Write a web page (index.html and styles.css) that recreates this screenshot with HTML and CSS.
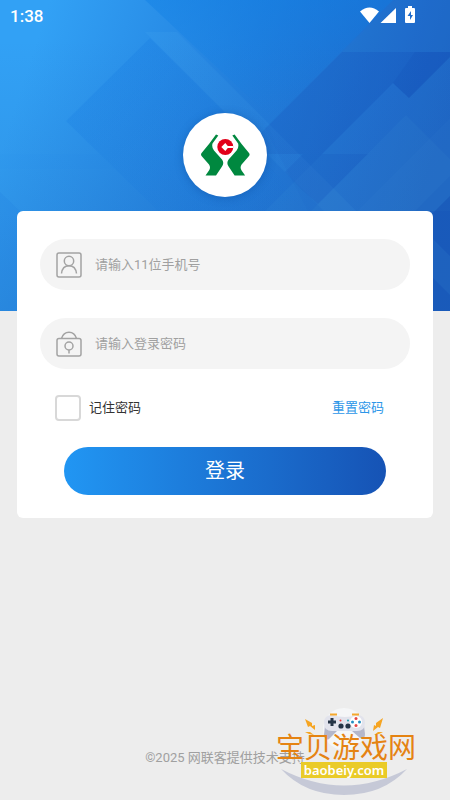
FILE: index.html
```html
<!DOCTYPE html>
<html lang="zh-CN">
<head>
<meta charset="utf-8">
<meta name="viewport" content="width=device-width, initial-scale=1">
<title>登录</title>
<link rel="stylesheet" href="styles.css">
</head>
<body>
<header class="hero">
  <svg class="hero-art" viewBox="0 0 450 311" preserveAspectRatio="none" aria-hidden="true">
    <defs>
      <linearGradient id="sky" gradientUnits="userSpaceOnUse" x1="30" y1="60" x2="430" y2="190">
        <stop offset="0" stop-color="#32a1f5"/>
        <stop offset=".5" stop-color="#227fdd"/>
        <stop offset="1" stop-color="#1c61c3"/>
      </linearGradient>
      <linearGradient id="shade" x1="0" y1="0" x2="1" y2="1">
        <stop offset="0" stop-color="#0b6ddc" stop-opacity=".22"/>
        <stop offset="1" stop-color="#0b6ddc" stop-opacity="0"/>
      </linearGradient>
      <linearGradient id="top" x1="0" y1="0" x2="0" y2="1">
        <stop offset="0" stop-color="#0d7de4" stop-opacity=".4"/>
        <stop offset="1" stop-color="#0d7de4" stop-opacity="0"/>
      </linearGradient>
      <linearGradient id="light" x1="0" y1="0" x2="1" y2="1">
        <stop offset="0" stop-color="#5ab8f2" stop-opacity=".1"/>
        <stop offset="1" stop-color="#5ab8f2" stop-opacity=".07"/>
      </linearGradient>
      <linearGradient id="low" x1="0" y1="0" x2="0" y2="1">
        <stop offset="0" stop-color="#2468b8" stop-opacity="0"/>
        <stop offset="1" stop-color="#2468b8" stop-opacity=".3"/>
      </linearGradient>
    </defs>
    <path fill="url(#sky)" d="M0 0h450v311H0z"/>
    <path fill="url(#low)" d="M0 40h450v271H0z"/>
    <path fill="url(#top)" d="M145 0h248L273 120z"/>
    <path fill="url(#shade)" d="M150 38 66 121l92 90h150L225 113z"/>
    <path fill="url(#light)" d="M145 32h32l179 179h-32z"/>
    <path fill="#1558bd" fill-opacity=".08" d="M395 0h55v211H308l-43-83z"/>
    <path fill="#3a97df" fill-opacity=".08" d="M395 0h55v52H342z"/>
    <path fill="#0d45ad" fill-opacity=".12" d="M342 52h108v5l-41 41-16-15-71 71h-82z"/>
    <path fill="#0d45ad" fill-opacity=".12" d="m415 52h35v5l-41 41-16-15z"/>
    <path fill="#4aa5e2" fill-opacity=".08" d="m450 57-41 41-16-15-128 128h150l35-35z"/>
    <path fill="#0d49ae" fill-opacity=".13" d="M303 154h65l-50 50-16-14-17-18z"/>
    <path fill="#50a6df" fill-opacity=".08" d="m406 115 44 44v52H311z"/>
    <path fill="#3b8bd8" fill-opacity=".08" d="m450 118-93 93h78l15-15z"/>
    <path fill="#0c40a9" fill-opacity=".25" d="m450 196-22 22v93h22z"/>
    <path fill="#4b9be1" fill-opacity=".12" d="m433 239 17 17v39l-17-17z"/>
    <path fill="#1875dc" fill-opacity=".12" d="m0 192 20 19v100H0z"/>
    <path fill="#238be9" fill-opacity=".05" d="M0 154h190v15H0z"/>
  </svg>
  <div class="status">
    <time>1:38</time>
    <svg width="56" height="18" viewBox="0 0 56 18" fill="#fff" role="img" aria-label="网络与电量">
      <path d="M0 5.500Q9.500-2.500 19 5.500L9.500 17z"/>
      <path d="M36 2v15H20.500z"/>
      <path fill-rule="evenodd" d="M48 0h4v2h2q1 0 1 1v13q0 1-1 1h-8q-1 0-1-1V3q0-1 1-1h2zm3 5-3.500 5H50v4l3-5h-2z"/>
    </svg>
  </div>
  <div class="logo">
    <svg width="49" height="42" viewBox="0 0 49 42" role="img" aria-label="标志">
      <g fill="#00883f">
        <path d="M15 .5 17.300 1.500 11.500 9.500q-1 4 1.500 7l8 9q2.500 3.500 0 7l-6 9H4.500l3.500-5q2-3 0-6l-7-8q-2-2 0-4L8 10z"/>
        <path transform="translate(48.600) scale(-1 1)" d="M15 .5 17.300 1.500 11.500 9.500q-1 4 1.500 7l8 9q2.500 3.500 0 7l-6 9H4.500l3.500-5q2-3 0-6l-7-8q-2-2 0-4L8 10z"/>
      </g>
      <circle cx="24.300" cy="13" r="8" fill="#e2001a"/>
      <path fill="#fff" d="M24.300 9 26.800 12h5.700v2h-5.700l-2.500 3-4-4z"/>
    </svg>
  </div>
</header>

<main class="card">
  <form>
    <div class="field">
      <svg class="field-icon" viewBox="0 0 26 26" aria-hidden="true">
        <rect x="1" y="1" width="24" height="24" rx="2"/>
        <circle cx="13" cy="9" r="4.700"/>
        <path d="M5.500 21.500C6 17 8.500 13.700 13 13.700s7 3.300 7.500 7.800"/>
      </svg>
      <input type="tel" aria-label="手机号" placeholder="请输入11位手机号">
    </div>
    <div class="field">
      <svg class="field-icon" viewBox="0 0 26 26" aria-hidden="true">
        <rect x="1" y="7.500" width="24" height="17.500" rx="2"/>
        <path d="M5.500 7.500C8-.8 18-.8 20.500 7.500"/>
        <circle cx="13" cy="15" r="4"/>
        <path d="M13 19v3.500"/>
      </svg>
      <input type="password" aria-label="登录密码" placeholder="请输入登录密码">
    </div>
    <div class="options">
      <label><input type="checkbox">记住密码</label>
      <a href="#reset">重置密码</a>
    </div>
    <button type="submit">登录</button>
  </form>
</main>

<footer class="footer">©2025 网联客提供技术支持</footer>

<aside class="mark">
  <svg class="mark-art" viewBox="0 0 140 88" aria-hidden="true">
    <path fill="#c6c9d7" d="M5 61q63 33 126 0-24 26-63 26T5 61z"/>
    <circle cx="68" cy="21" r="21" fill="#f6f7f9" fill-opacity=".8"/>
    <path fill="#b4b7ca" d="M53 9h31q3 1 4 8l1 9q0 6-5 4l-8-7H61l-8 8q-4 2-5-4l1-10q1-7 4-8z"/>
    <path fill="#e2e3ec" d="M56 7q13 4 25 0 8 0 8 8t-8 8H56q-8 0-8-8t8-8z"/>
    <path stroke="#f5a82c" stroke-width="2" d="M54 6.500h7M76 6.500h7"/>
    <path stroke="#253446" stroke-width="3" d="M52 14h8M56 10v8"/>
    <g fill="#253446"><circle cx="65" cy="18" r="2.600"/><circle cx="72" cy="18" r="2.600"/></g>
    <circle cx="64.500" cy="12.500" r="1" fill="#e33"/><circle cx="72" cy="12.500" r="1" fill="#29a"/>
    <circle cx="80" cy="14" r="6" fill="#fff"/>
    <g fill="#e64545"><circle cx="80" cy="10.500" r="1.500"/><circle cx="80" cy="17.500" r="1.500"/></g>
    <g fill="#248fc2"><circle cx="76.500" cy="14" r="1.500"/><circle cx="83.500" cy="14" r="1.500"/></g>
    <path fill="#f6a522" d="m29 11 7 4v3l3-1v5l-5-4-2 1zM29 24l5 0 4 3-5-1zM107 10l-7 5v3l-2-1-1 6 5-4 2 1zM107 24l-5 0-4 3 5-1z"/>
  </svg>
  <strong>宝贝游戏网</strong>
  <span>baobeiy.com</span>
</aside>
</body>
</html>
```
FILE: styles.css
```css
* {
  box-sizing: border-box;
}

body {
  margin: 0;
  min-height: 100vh;
  display: flex;
  flex-direction: column;
  position: relative;
  background: #ededed;
  color: #333;
  font: 13px/20px Roboto, "Noto Sans CJK SC", sans-serif;
}

.hero {
  position: relative;
  height: 311px;
  display: flex;
  flex-direction: column;
  align-items: center;
}

.hero-art {
  position: absolute;
  inset: 0;
  width: 100%;
  height: 100%;
}

.status {
  position: relative;
  align-self: stretch;
  display: flex;
  justify-content: space-between;
  padding: 6px 34px 0 10px;
  color: #fff;
  font-size: 17px;
  font-weight: 500;
}

.logo {
  position: relative;
  width: 84px;
  height: 84px;
  margin-top: 87px;
  display: grid;
  place-items: center;
  border-radius: 50%;
  background: #fff;
  box-shadow: 0 1px 8px rgb(10 70 150 / 40%);
}

.card {
  position: relative;
  margin: -100px 17px 0;
  padding: 28px 23px 23px;
  border-radius: 6px;
  background: #fff;
}

.field {
  display: flex;
  align-items: center;
  gap: 13px;
  height: 51px;
  margin-bottom: 28px;
  padding: 0 16px;
  border-radius: 26px;
  background: #f4f4f4;
}

.field-icon {
  width: 26px;
  height: 26px;
  fill: none;
  stroke: #a3a3a3;
  stroke-width: 1.5;
}

.field input {
  flex: 1;
  min-width: 0;
  padding: 0;
  border: 0;
  outline: 0;
  background: none;
  color: inherit;
  font: inherit;
}

.field input::placeholder {
  color: #a0a0a0;
}

.options {
  display: flex;
  align-items: center;
  justify-content: space-between;
  margin: -2px 26px 26px 15px;
}

.options label {
  display: flex;
  align-items: center;
  gap: 8px;
}

.options input {
  appearance: none;
  width: 26px;
  height: 26px;
  margin: 0;
  border: 2px solid #d8d8d8;
  border-radius: 4px;
  background: #fff;
}

.options input:checked {
  background: #2095f2;
}

.options a {
  color: #2c96e8;
  text-decoration: none;
}

button {
  display: block;
  width: calc(100% - 48px);
  height: 48px;
  margin: 0 auto;
  border: 0;
  border-radius: 24px;
  background: linear-gradient(90deg, #2196f3, #1653b5);
  color: #fff;
  font: inherit;
  font-size: 20px;
}

.footer {
  margin-top: auto;
  padding-bottom: 32px;
  color: #a0a0a0;
  text-align: center;
}

.mark {
  position: absolute;
  right: 34px;
  bottom: 4px;
  width: 140px;
  height: 88px;
  display: flex;
  flex-direction: column;
  align-items: center;
  padding-top: 28px;
  white-space: nowrap;
}

.mark-art {
  position: absolute;
  inset: 0;
}

.mark strong {
  position: relative;
  color: #e58312;
  font-size: 28px;
  font-weight: 400;
  line-height: 26px;
}

.mark span {
  position: relative;
  margin-right: 4px;
  padding: 0 3px;
  background: #eacb28;
  color: #fff;
  font: 600 13px/16px "Noto Sans", sans-serif;
}
```
